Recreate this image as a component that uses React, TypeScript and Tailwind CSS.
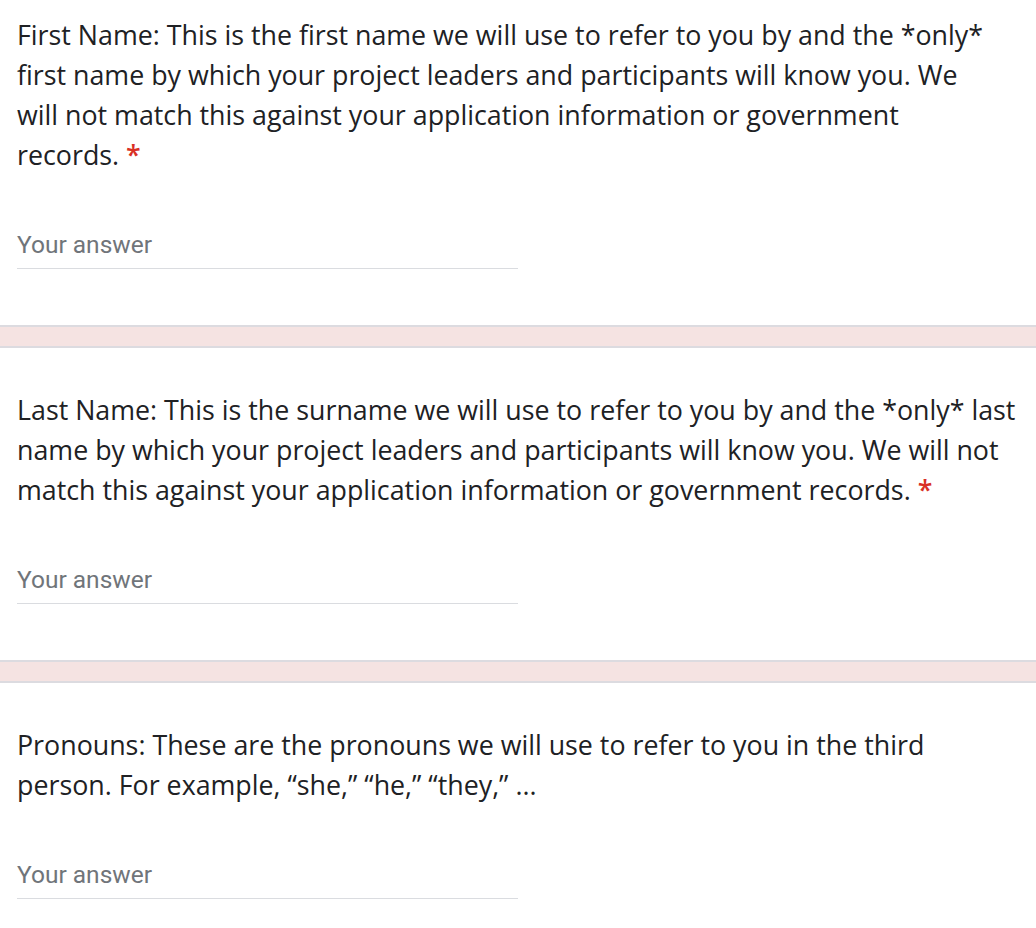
interface Question {
  lines: string[];
  required: boolean;
}

const questions: Question[] = [
  {
    lines: [
      "First Name: This is the first name we will use to refer to you by and the *only*",
      "first name by which your project leaders and participants will know you. We",
      "will not match this against your application information or government",
      "records.",
    ],
    required: true,
  },
  {
    lines: [
      "Last Name: This is the surname we will use to refer to you by and the *only* last",
      "name by which your project leaders and participants will know you. We will not",
      "match this against your application information or government records.",
    ],
    required: true,
  },
  {
    lines: [
      "Pronouns: These are the pronouns we will use to refer to you in the third",
      "person. For example, \u201cshe,\u201d \u201che,\u201d \u201cthey,\u201d ...",
    ],
    required: false,
  },
];

const QuestionBlock = ({ q, first }: { q: Question; first: boolean }) => {
  return (
    <div className={first ? "bg-white pl-[17px] pt-[15px] pb-[56px]" : "bg-white pl-[17px] pt-[42px] pb-[56px]"}>
      <div className="font-['Open_Sans',sans-serif] text-[26.8px] leading-[40px] text-[#202124]">
        {q.lines.map((l, i) => (
          <div key={i} className="whitespace-nowrap">
            {l}
            {q.required && i === q.lines.length - 1 && <span className="text-[#d93025] font-semibold"> *</span>}
          </div>
        ))}
      </div>
      <div className="mt-[54px] w-[501px] border-b border-[#dadce0] pb-[8px] pt-px font-['Roboto',sans-serif] text-[24.5px] leading-[30px] text-[#70757a]">
        Your answer
      </div>
    </div>
  );
};

const Divider = () => <div className="h-[23px] border-y-2 border-[#dcdbe0] bg-[#f5e3e2]" />;

export default function App() {
  return (
    <div className="min-h-[928px] bg-white">
      {questions.map((q, i) => (
        <div key={i}>
          {i > 0 && <Divider />}
          <QuestionBlock q={q} first={i === 0} />
        </div>
      ))}
    </div>
  );
}
